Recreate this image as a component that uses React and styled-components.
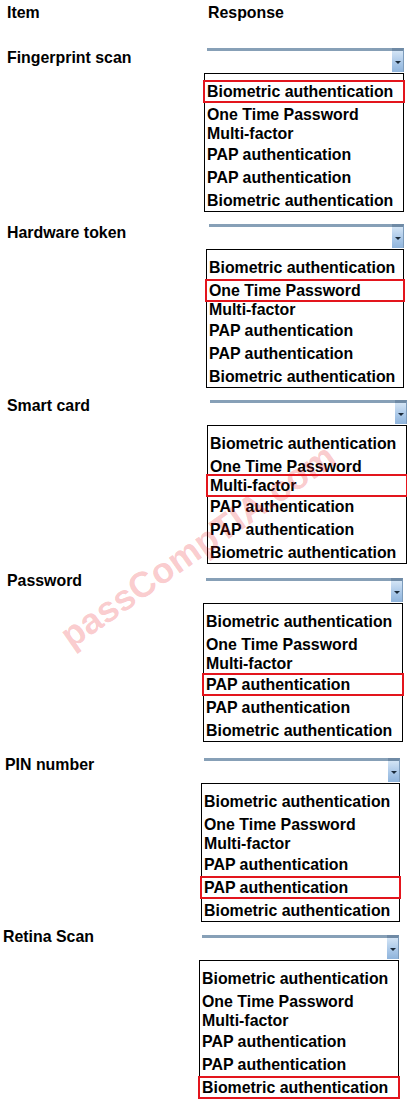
import React from 'react';
import styled, { createGlobalStyle } from 'styled-components';

const GlobalStyle = createGlobalStyle`
    body {
        margin: 0;
        background: #ffffff;
        font-family: "Liberation Sans", Arial, sans-serif;
        font-weight: 700;
        font-size: 15.9px;
        color: #000000;
    }
`

const Page = styled.div`
    position: relative;
    width: 407px;
    height: 1106px;
    overflow: hidden;
`

const Header = styled.div`
    display: flex;
    height: 25px;
    line-height: 25px;
`

const HeadCell = styled.div`
    flex: 0 0 ${p => p.width}px;
    padding-left: ${p => p.indent}px;
    box-sizing: border-box;
`

const Section = styled.div`
    display: flex;
    align-items: flex-start;
    margin-top: ${p => p.gap}px;
`

const Label = styled.div`
    flex: 0 0 190px;
    box-sizing: border-box;
    padding-left: ${p => p.indent}px;
    line-height: 20px;
    margin-top: ${p => p.shift}px;
`

const Response = styled.div`
    display: flex;
    flex-direction: column;
    margin-left: ${p => p.left - 190}px;
    width: ${p => p.width}px;
`

const Combo = styled.div`
    display: flex;
    height: 25px;
    padding-left: 3px;
`

const Field = styled.div`
    flex: 1;
    border-top: 3px solid #87a0b7;
`

const ArrowButton = styled.div`
    width: 11px;
    height: 21px;
    border-top: 3px solid #6f8aa5;
    border-right: 1px solid #7c9bbb;
    box-sizing: content-box;
    background: linear-gradient(#d3e4f5, #aac8e8 55%, #8fb4dc);
    display: flex;
    align-items: center;
    justify-content: center;
`

const Caret = styled.span`
    width: 0;
    height: 0;
    border-left: 3px solid transparent;
    border-right: 3px solid transparent;
    border-top: 3px solid #1a2a3a;
    margin-top: 1px;
`

const ListBox = styled.div`
    border: 1px solid #000000;
    padding: 8px 0 1px;
`

const Option = styled.div`
    height: 19px;
    line-height: 19px;
    padding-left: 2px;
    white-space: nowrap;
    margin-top: ${p => p.gap}px;
    outline: ${p => (p.picked ? '2.5px solid #e3151d' : 'none')};
    outline-offset: 0.5px;
`

const Watermark = styled.div`
    position: absolute;
    left: 198px;
    top: 546px;
    transform: translate(-50%, -50%) rotate(-35deg);
    font-size: 36px;
    color: rgba(235, 30, 40, 0.24);
    white-space: nowrap;
    pointer-events: none;
`

const options = [
    'Biometric authentication',
    'One Time Password',
    'Multi-factor',
    'PAP authentication',
    'PAP authentication',
    'Biometric authentication',
]
const gaps = [0, 4, 0, 2, 4, 4]

const items = [
    { name: 'Fingerprint scan', gap: 23, indent: 7, shift: 0, left: 204, right: 403, picked: 0 },
    { name: 'Hardware token', gap: 12, indent: 7, shift: -1, left: 206, right: 403, picked: 1 },
    { name: 'Smart card', gap: 12, indent: 7, shift: -4, left: 207, right: 406, picked: 2 },
    { name: 'Password', gap: 14, indent: 7, shift: -7, left: 203, right: 402, picked: 3 },
    { name: 'PIN number', gap: 16, indent: 5, shift: -3, left: 201, right: 399, picked: 4 },
    { name: 'Retina Scan', gap: 13, indent: 3, shift: -8, left: 199, right: 398, picked: 5 },
]

function App() {
    return (
        <Page>
            <GlobalStyle />
            <Header>
                <HeadCell width={190} indent={7}>Item</HeadCell>
                <HeadCell width={200} indent={18}>Response</HeadCell>
            </Header>
            {items.map(item => (
                <Section key={item.name} gap={item.gap}>
                    <Label indent={item.indent} shift={item.shift}>{item.name}</Label>
                    <Response left={item.left} width={item.right - item.left + 1}>
                        <Combo>
                            <Field />
                            <ArrowButton><Caret /></ArrowButton>
                        </Combo>
                        <ListBox>
                            {options.map((opt, i) => (
                                <Option key={i} gap={gaps[i]} picked={i === item.picked}>{opt}</Option>
                            ))}
                        </ListBox>
                    </Response>
                </Section>
            ))}
            <Watermark>passCompTIA.com</Watermark>
        </Page>
    )
}

export default App;
